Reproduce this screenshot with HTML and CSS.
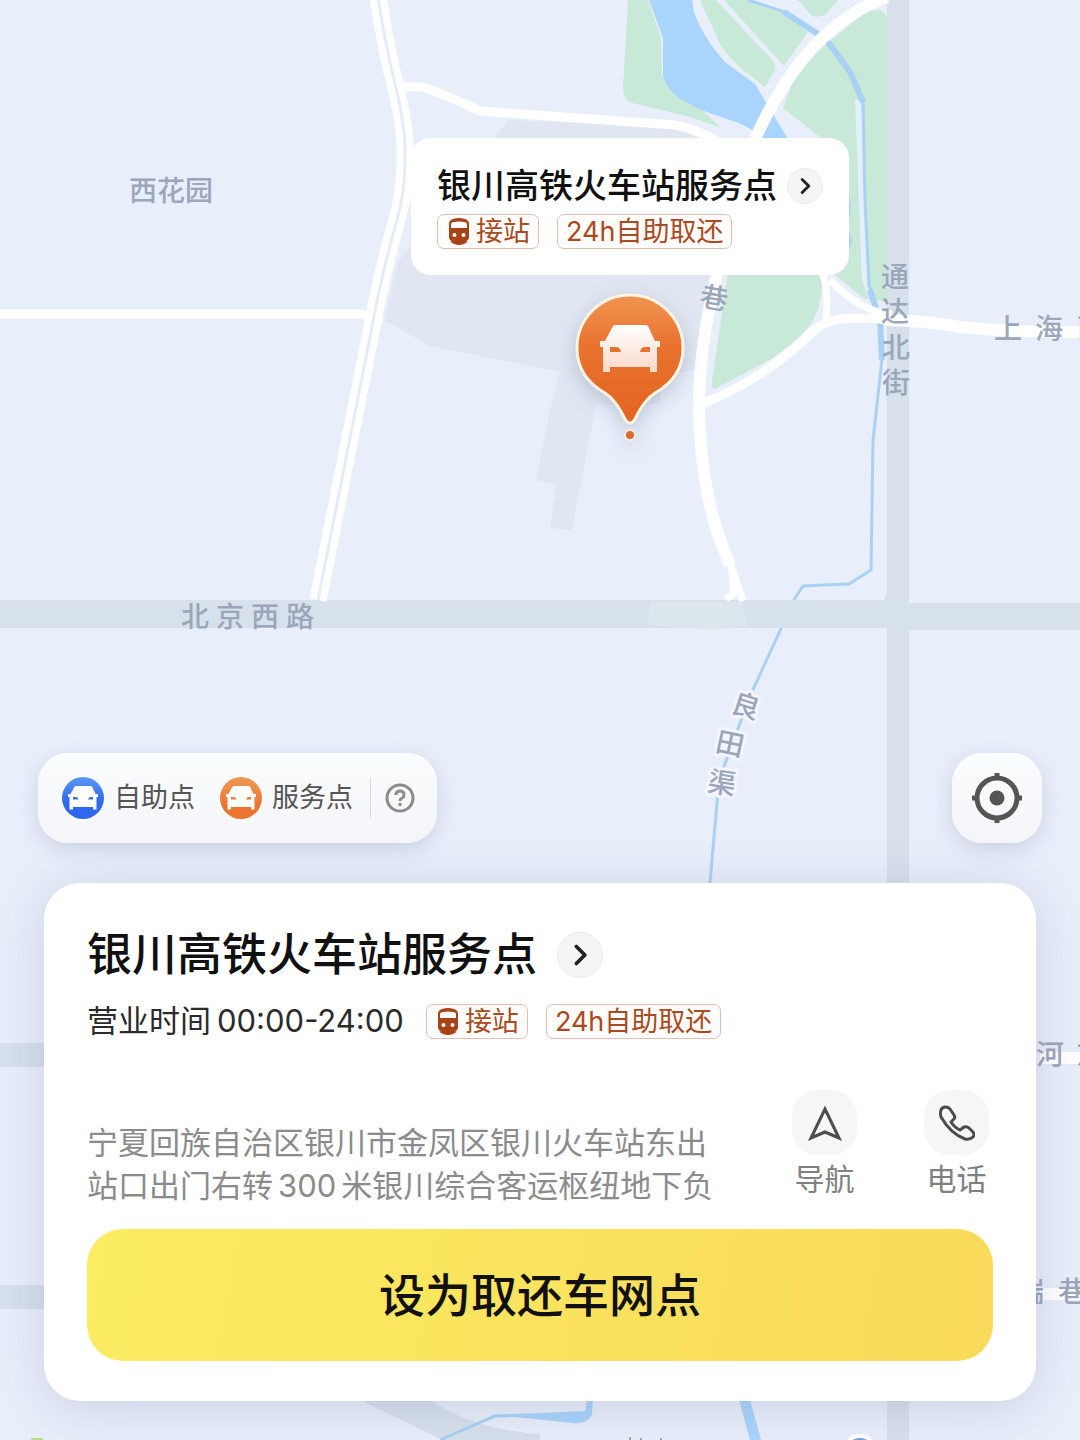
FILE: index.html
```
<!DOCTYPE html>
<html lang="zh-CN">
<head>
    <meta charset="UTF-8">
    <meta name="viewport" content="width=device-width, initial-scale=1.0">
    <title>取还车网点</title>
    <link rel="stylesheet" href="styles.css">
</head>
<body>

<!-- Shared icons -->
<svg class="sprite" aria-hidden="true">
    <symbol id="car" viewBox="0 0 60 48">
        <path fill-rule="evenodd" d="M16 0h29q3 0 4 3l6 13h5v6h-3v25h-7v-5H10v5H3V22H0v-6h5l7-13q1-3 4-3zM10 22v5h11q-1-5-5-5zM50 22v5H40q1-5 5-5z"/>
    </symbol>
    <symbol id="train" viewBox="0 0 22 27">
        <path fill-rule="evenodd" d="M5 1q6-2 12 0 4 1 4 5v13q0 3-3 4l2 1q-3 1-4 2-5 2-10 0-1-1-4-2l2-1q-3-1-3-4V6q0-4 4-5zM3 7v3h16V7q0-3-3-3-5-1-10 0-3 0-3 3zM6.500 15a2 2 0 100 4 2 2 0 100-4zM15.500 15a2 2 0 100 4 2 2 0 100-4z"/>
    </symbol>
    <symbol id="chevron" viewBox="0 0 36 36">
        <path d="M15 11l7 7-7 7" fill="none" stroke="#222" stroke-width="3" stroke-linecap="round" stroke-linejoin="round"/>
    </symbol>
</svg>

<div class="map">
    <svg class="map-canvas" viewBox="0 0 1080 1440" preserveAspectRatio="xMidYMin slice">
        <!-- station area -->
        <path class="area" d="M508 120L700 128 724 270 700 370 662 374 660 404 596 405 572 530 550 528 556 484 536 480 551 405 560 372 430 346 384 320 398 262z"/>

        <!-- parks -->
        <g class="park">
            <path d="M628 0h20l13 38 1 36 9 14 29 20 21 20-31-11-58-14q-8-2-9-15z"/>
            <path d="M700 0h16l58 62q2 4 0 10l-9 15-23-18q-14-12-22-25z"/>
            <path d="M724 0h24l34 12 26 20-24 34z"/>
            <path d="M798 0h40l-13 15q-7 3-13 1z"/>
            <path d="M834 38l30-25q14-8 23 3v286l-24-4-30-25-13-136-37-29 8-22 17-27z"/>
            <path d="M728 272h94q2 32-13 54-12 15-38 33l-56 30q-4 0-3-8z"/>
        </g>

        <!-- water -->
        <path class="water" d="M649 0h43l2 12q8 24 31 50l30 22q9 15 33 55h-25q-14-14-36-20-30-9-46-20-15-9-18-24V38z"/>
        <path class="bank" d="M858 100l7 180 12 30"/>
        <path class="stream" d="M748 0l37 12 33 22 10 8 22 30 13 28 2 100 4 85 10 34 3 40-9 81-2 130-22 14-46 2-8 12-44 96-32 86-9 103"/>
        <path class="stream thick" d="M784 12l34 22M828 42l22 30 13 30M870 290l10 30 2 40"/>
        <path class="water" d="M848 192q6 18 0 28zM848 230q8 12 0 20z"/>

        <!-- main streets -->
        <g class="street">
            <path d="M0 600h884q4-4 3-30V0h22v603h171v27H909v810h-22V628H0z"/>
            <path d="M0 1043h60v24H0zM0 1285h60v24H0zM360 1400h70q45 30 110 34v12h-85z"/>
        </g>
        <path class="overpass" d="M650 602h92l6 24-36 4-64-5z"/>

        <!-- side roads -->
        <g class="road">
            <path d="M400 87h23q28 10 57 24l110 8 85 6q22 4 45 18"/>
            <path d="M0 314h362l20 8"/>
            <path class="wide" d="M887-3q-34 12-66 42-38 38-66 100"/>
            <path class="wide" d="M718 270q-19 74-19 135 1 76 20 132l11 28"/>
            <path class="thin" d="M729 560l14 41M730 562q4 18 3 32l-7 5"/>
            <path d="M702 404q66-27 112-74 15-12 42-12 17 0 34 2"/>
            <path class="thin" d="M822 272q8 22 3 52M830 280q30 32 62 34"/>
            <path class="wide" d="M884 320q46 1 76 7 50 5 120 5M1040 1058h50M1040 1294h50"/>
            <path class="double" d="M378-4q6 44 19 96 9 40 8 65 1 34-10 70-14 50-25 110L318 600"/>
            <path class="median" d="M378-4q6 44 19 96 9 40 8 65 1 34-10 70-14 50-25 110L318 600"/>
        </g>

        <!-- bottom edge -->
        <path class="stream" d="M440 1440l55-24 30-1"/>
        <path class="water" d="M495 1415l90-4 3-14h5l-1 18q-6 10-20 8zM738 1396h11l12 44h-11z"/>
        <circle cx="860" cy="1452" r="16" fill="#6c9fdb" stroke="#fff" stroke-width="4"/>
        <path d="M31 1440v-2h12v2z" fill="#b8dd86"/>
        <path d="M630 1437v4M641 1438v3M661 1438v3" stroke="#9aa5ba" stroke-width="2"/>

        <!-- place names -->
        <g class="place">
            <text x="129" y="201">西花园</text>
            <text x="181 216 251 286" y="627">北京西路</text>
            <text x="881 881 882 882" y="287 322 358 393">通达北街</text>
            <text x="994 1035 1077" y="339">上海西</text>
            <text x="1036 1076" y="1065">河东</text>
            <text x="1016 1058" y="1302">瑞巷</text>
            <text transform="rotate(10 714 298)" x="700" y="308">巷</text>
            <g class="canal-name">
                <text transform="rotate(18 746 706)" x="732" y="716">良</text>
                <text transform="rotate(12 730 744)" x="716" y="754">田</text>
                <text transform="rotate(9 722 783)" x="708" y="793">渠</text>
            </g>
        </g>
    </svg>

    <div class="marker">
        <div class="callout">
            <div class="title-row">
                <h2>银川高铁火车站服务点</h2>
                <button class="more" type="button" aria-label="查看详情"><svg><use href="#chevron"/></svg></button>
            </div>
            <div class="tags">
                <span class="tag"><svg><use href="#train"/></svg>接站</span>
                <span class="tag">24h自助取还</span>
            </div>
        </div>
        <svg class="pin" viewBox="0 0 114 150">
            <defs>
                <linearGradient id="pinFill" x1="0" y1="0" x2="0" y2="1">
                    <stop offset="0" stop-color="#f09550"/>
                    <stop offset="0.400" stop-color="#e9722f"/>
                    <stop offset="1" stop-color="#e36420"/>
                </linearGradient>
                <linearGradient id="carFill" x1="0" y1="0" x2="0" y2="1">
                    <stop offset="0" stop-color="#fff"/>
                    <stop offset="1" stop-color="#fbd9c8"/>
                </linearGradient>
            </defs>
            <path d="M57 4a53 53 0 0 1 53 53c0 22-12 36-28 45q-11 7-20 26-5 8-10 0-9-19-20-26C16 93 4 79 4 57A53 53 0 0 1 57 4z" fill="url(#pinFill)" stroke="#fff3e4" stroke-width="3"/>
            <use href="#car" x="27" y="34" width="60" height="48" fill="url(#carFill)"/>
            <circle cx="57" cy="144" r="5" fill="#d96a33" stroke="#fdeee2" stroke-width="2"/>
        </svg>
    </div>
</div>

<main class="panel">
    <div class="toolbar">
        <div class="legend">
            <span class="legend-icon self"><svg><use href="#car"/></svg></span>
            <span class="legend-text">自助点</span>
            <span class="legend-icon service"><svg><use href="#car"/></svg></span>
            <span class="legend-text">服务点</span>
            <button class="help" type="button" aria-label="帮助">
                <svg viewBox="0 0 30 30" fill="none" stroke="#8c8c8c" stroke-width="3">
                    <circle cx="15" cy="15" r="13"/>
                    <path d="M11 12q0-4 4-4t4 4q0 2-2 3t-2 3"/>
                    <circle cx="15" cy="21.500" r="1" stroke-width="1.500" fill="#8c8c8c"/>
                </svg>
            </button>
        </div>
        <button class="locate" type="button" aria-label="定位">
            <svg viewBox="0 0 50 50">
                <circle cx="25" cy="25" r="20" fill="none" stroke="#555" stroke-width="5"/>
                <circle cx="25" cy="25" r="7.500" fill="#555"/>
                <path d="M25 0v6M25 44v6M0 25h6M44 25h6" stroke="#555" stroke-width="5"/>
            </svg>
        </button>
    </div>

    <section class="card">
        <div class="title-row">
            <h1>银川高铁火车站服务点</h1>
            <button class="more" type="button" aria-label="查看详情"><svg><use href="#chevron"/></svg></button>
        </div>
        <div class="hours-row">
            <p class="hours"><span>营业时间</span><span>00:00-24:00</span></p>
            <div class="tags">
                <span class="tag"><svg><use href="#train"/></svg>接站</span>
                <span class="tag">24h自助取还</span>
            </div>
        </div>
        <div class="info">
            <p class="address">宁夏回族自治区银川市金凤区银川火车站东出站口出门右转<span class="distance">300</span>米银川综合客运枢纽地下负</p>
            <div class="actions">
                <button class="action" type="button">
                    <span class="action-icon">
                        <svg viewBox="0 0 36 36" fill="none" stroke="#4c4c4c" stroke-width="3">
                            <path d="M18 4l14 29-14-6-14 6z"/>
                        </svg>
                    </span>
                    导航
                </button>
                <button class="action" type="button">
                    <span class="action-icon">
                        <svg viewBox="0 0 36 36" fill="none" stroke="#4c4c4c" stroke-width="3" stroke-linejoin="round">
                            <path d="M2 5q1-3 5-3 2 0 4 2l4 6q2 3-1 5l-2 2q3 5 9 8l4-3q3-1 5 1l4 4q2 3 0 5-3 3-8 2Q12 29 2 12q-1-4 0-7z"/>
                        </svg>
                    </span>
                    电话
                </button>
            </div>
        </div>
        <button class="submit" type="button">设为取还车网点</button>
    </section>
</main>

</body>
</html>
```
FILE: styles.css
```
* {
    box-sizing: border-box;
}

body {
    margin: 0;
    min-height: 100vh;
    display: flex;
    flex-direction: column;
    justify-content: flex-end;
    position: relative;
    overflow: hidden;
    background-color: #e8effa;
    font-family: Inter, "Noto Sans CJK SC", sans-serif;
    color: #111;
}

h1, h2, p {
    margin: 0;
}

button {
    border: none;
    padding: 0;
    background: none;
    font-family: inherit;
    color: inherit;
    cursor: pointer;
}

svg {
    display: block;
}

.sprite {
    position: absolute;
    width: 0;
    height: 0;
}

/* Map */
.map {
    position: absolute;
    inset: 0;
}

.map-canvas {
    width: 100%;
    height: 100%;
}

.area {
    fill: #e0e7f2;
}

.park {
    fill: #c8e9d7;
}

.water {
    fill: #a9d4fb;
}

.stream {
    fill: none;
    stroke: #a9d1f3;
    stroke-width: 3;
}

.stream.thick {
    stroke-width: 6;
}

.bank {
    fill: none;
    stroke: #e3effa;
    stroke-width: 6;
}

.street {
    fill: #d6e1eb;
}

.overpass {
    fill: #dce7ed;
}

.road {
    fill: none;
    stroke: #fff;
    stroke-width: 9;
}

.road .thin {
    stroke-width: 7;
}

.road .wide {
    stroke-width: 12;
}

.road .double {
    stroke-width: 17;
}

.road .median {
    stroke: #e6ecf5;
    stroke-width: 3;
}

.place {
    font-size: 28px;
    font-weight: 500;
    fill: #9ba6ba;
}

.canal-name {
    stroke: #f3f7fd;
    stroke-width: 6px;
    stroke-linejoin: round;
    paint-order: stroke;
}

/* Marker */
.marker {
    position: absolute;
    top: 138px;
    left: calc(50% + 90px);
    transform: translateX(-50%);
    display: flex;
    flex-direction: column;
    align-items: center;
    gap: 16px;
}

.callout {
    padding: 24px 26px 26px;
    border-radius: 20px;
    background-color: #fff;
}

.title-row {
    display: flex;
    align-items: center;
    white-space: nowrap;
}

.callout .title-row {
    gap: 10px;
}

.callout h2 {
    font-size: 34px;
    line-height: 48px;
    font-weight: 500;
}

.more {
    width: 36px;
    height: 36px;
    border: 1px solid #ebebeb;
    border-radius: 50%;
    background-color: #f5f5f5;
}

.more svg {
    width: 100%;
    height: 100%;
}

.tags {
    display: flex;
    gap: 18px;
}

.callout .tags {
    margin-top: 4px;
}

.tag {
    display: flex;
    align-items: center;
    gap: 6px;
    height: 35px;
    padding: 0 8px;
    border: 1px solid #dfbfb2;
    border-radius: 7px;
    background-color: #fffdfb;
    font-size: 27px;
    line-height: 33px;
    color: #a94a20;
    white-space: nowrap;
}

.tag svg {
    width: 22px;
    height: 27px;
    margin-left: 2px;
    fill: #a84318;
}

.pin {
    width: 114px;
    height: 150px;
    filter: drop-shadow(0 6px 10px rgba(90, 105, 140, 0.3));
}

/* Bottom panel */
.panel {
    position: relative;
    padding-bottom: 39px;
}

.toolbar {
    display: flex;
    justify-content: space-between;
    padding: 0 38px;
    margin-bottom: 40px;
}

.legend, .locate {
    display: flex;
    align-items: center;
    height: 90px;
    border-radius: 30px;
    background: linear-gradient(#fafcfd, #f4f5f8);
    box-shadow: 0 6px 20px rgba(90, 90, 130, 0.2);
}

.legend {
    padding: 0 22px 0 24px;
}

.locate {
    width: 90px;
    justify-content: center;
}

.locate svg {
    width: 50px;
    height: 50px;
}

.legend-icon {
    display: flex;
    align-items: center;
    justify-content: center;
    width: 42px;
    height: 42px;
    border-radius: 50%;
    box-shadow: 0 2px 4px rgba(255, 255, 255, 0.9);
}

.legend-icon svg {
    width: 30px;
    height: 24px;
    fill: #fff;
}

.self {
    background: linear-gradient(#5b97f5, #2f67ee 60%);
}

.service {
    background: linear-gradient(#ef9a55, #ec7430 70%);
}

.legend-text {
    margin: 0 25px 0 10px;
    font-size: 27px;
    line-height: 40px;
    color: #555;
}

.help {
    display: flex;
    align-items: center;
    height: 40px;
    margin-left: -8px;
    padding-left: 14px;
    border-left: 1px solid #d9dade;
}

.help svg {
    width: 30px;
    height: 30px;
}

.card {
    margin: 0 44px;
    padding: 44px 43px 40px;
    border-radius: 36px;
    background-color: #fff;
    box-shadow: 0 6px 50px rgba(90, 80, 130, 0.2);
}

.card .title-row {
    gap: 20px;
}

.card h1 {
    font-size: 45px;
    line-height: 56px;
    font-weight: 500;
}

.card .more {
    width: 46px;
    height: 46px;
}

.hours-row {
    display: flex;
    align-items: center;
    gap: 22px;
    margin-top: 20px;
}

.hours {
    display: flex;
    gap: 6px;
    font-size: 31px;
    line-height: 36px;
    color: #2b2b2b;
    white-space: nowrap;
}

.info {
    display: flex;
    justify-content: space-between;
    align-items: flex-end;
    margin: 51px 4px 22px 0;
}

.address {
    width: 640px;
    font-size: 31px;
    line-height: 43px;
    color: #8b8b8b;
}

.distance {
    margin: 0 5px;
}

.actions {
    display: flex;
    gap: 67px;
    align-self: flex-start;
    height: 117px;
}

.action {
    display: flex;
    flex-direction: column;
    align-items: center;
    gap: 3px;
    font-size: 30px;
    line-height: 43px;
    color: #808080;
}

.action-icon {
    display: flex;
    align-items: center;
    justify-content: center;
    width: 65px;
    height: 65px;
    border-radius: 26px;
    background-color: #f6f6f6;
}

.action-icon svg {
    width: 36px;
    height: 36px;
}

.submit {
    display: block;
    width: 100%;
    height: 132px;
    padding-bottom: 6px;
    border-radius: 36px;
    background: linear-gradient(100deg, #fbec62, #f9da5a);
    font-size: 46px;
    font-weight: 500;
}
```
